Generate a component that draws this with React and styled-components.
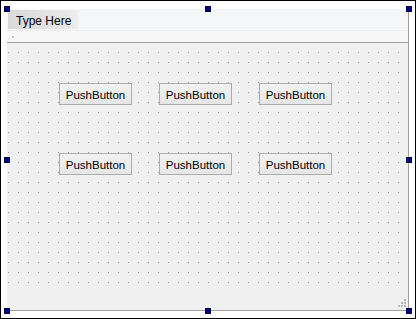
import React from 'react';
import styled, { createGlobalStyle } from 'styled-components';

const GlobalStyle = createGlobalStyle`
    html, body {
        margin: 0;
        padding: 0;
        background: #ffffff;
    }
    * {
        box-sizing: border-box;
    }
`;

const Frame = styled.div`
    width: 416px;
    height: 319px;
    border: 1px solid #000000;
    background: #ffffff;
    padding: 8px 0 0 6px;
`;

const Form = styled.div`
    position: relative;
    width: 402px;
    height: 302px;
    display: flex;
    flex-direction: column;
    background: #f0f0f0;
    border-right: 1px solid #a0a0a0;
    border-bottom: 1px solid #a0a0a0;
`;

const MenuBar = styled.div`
    height: 21px;
    display: flex;
    align-items: flex-start;
    padding: 1px 0 0 1px;
    background: #f5f6f7;
`;

const MenuItem = styled.div`
    width: 70px;
    height: 19px;
    padding: 2px 0 0 8px;
    display: flex;
    align-items: center;
    font-family: 'Liberation Sans', Arial, sans-serif;
    font-size: 12px;
    color: #000000;
    background: linear-gradient(to right, #dadada, #e6e6e6 80%, #eeeeee);
`;

const ToolStrip = styled.div`
    height: 13px;
    display: flex;
    align-items: center;
    padding-left: 5px;
    background: #f7f7f7;
    border-top: 1px solid #ececec;
    border-bottom: 1px solid #a0a0a0;
`;

const Grip = styled.span`
    width: 2px;
    height: 2px;
    background: #c4c4c4;
`;

const Canvas = styled.div`
    height: 247px;
    display: grid;
    grid-template-columns: repeat(3, 73px);
    grid-auto-rows: 22px;
    column-gap: 27px;
    row-gap: 48px;
    align-content: start;
    padding: 40px 0 0 52px;
    background-color: #a0a0a0;
    background-image:
        linear-gradient(to right, #f0f0f0 9px, transparent 9px),
        linear-gradient(to bottom, #f0f0f0 9px, transparent 9px);
    background-size: 10px 10px;
    background-position: 2px 0;
`;

const PushButton = styled.div`
    display: flex;
    align-items: center;
    justify-content: center;
    padding-top: 1px;
    border: 1px solid #acacac;
    background: linear-gradient(to bottom, #f2f2f2, #e6e6e6);
    font-family: 'Liberation Sans', Arial, sans-serif;
    font-size: 11.5px;
    color: #000000;
`;

const StatusBar = styled.div`
    flex: 1;
    display: flex;
    justify-content: flex-end;
    align-items: flex-end;
    padding: 0 2px 3px 0;
`;

const Handle = styled.span`
    position: absolute;
    width: 6px;
    height: 6px;
    border: 1px solid #000038;
    background: #00008c;
    left: ${p => p.$x}px;
    top: ${p => p.$y}px;
`;

const handles = [
    [-3, -3], [198, -3], [399, -3],
    [-3, 148], [399, 148],
    [-3, 299], [198, 299], [399, 299],
];

const App = () => {
    const buttons = Array.from({ length: 6 });

    return (
        <>
            <GlobalStyle />
            <Frame>
                <Form>
                    <MenuBar>
                        <MenuItem>Type Here</MenuItem>
                    </MenuBar>
                    <ToolStrip>
                        <Grip />
                    </ToolStrip>
                    <Canvas>
                        {buttons.map((_, i) => (
                            <PushButton key={i}>PushButton</PushButton>
                        ))}
                    </Canvas>
                    <StatusBar>
                        <svg width="8" height="8" viewBox="0 0 8 8">
                            <rect x="6" y="0" width="2" height="2" fill="#b8b8b8" />
                            <rect x="3" y="3" width="2" height="2" fill="#b8b8b8" />
                            <rect x="6" y="3" width="2" height="2" fill="#b8b8b8" />
                            <rect x="0" y="6" width="2" height="2" fill="#b8b8b8" />
                            <rect x="3" y="6" width="2" height="2" fill="#b8b8b8" />
                            <rect x="6" y="6" width="2" height="2" fill="#b8b8b8" />
                        </svg>
                    </StatusBar>
                    {handles.map(([x, y], i) => (
                        <Handle key={i} $x={x} $y={y} />
                    ))}
                </Form>
            </Frame>
        </>
    );
};

export default App;
